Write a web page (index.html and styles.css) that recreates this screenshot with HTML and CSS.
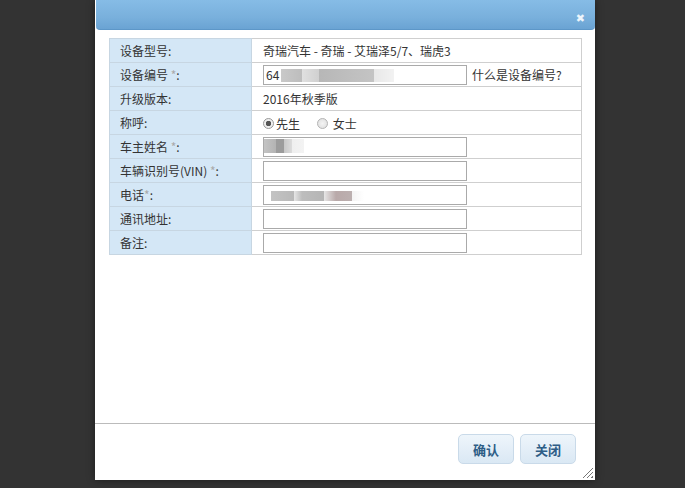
FILE: index.html
```html
<!DOCTYPE html>
<html lang="zh-CN">
<head>
  <meta charset="UTF-8" />
  <title>设备信息</title>
  <link rel="stylesheet" href="styles.css">
</head>
<body>
  <div class="dialog">
    <div class="titlebar">
      <span class="close">&#10006;</span>
    </div>

    <div class="content">
      <table class="form-table">
        <tr>
          <th>设备型号:</th>
          <td>奇瑞汽车 - 奇瑞 - 艾瑞泽5/7、瑞虎3</td>
        </tr>
        <tr>
          <th>设备编号 <i>*</i>:</th>
          <td><input type="text" class="masked mask-sn" value="64" /><span class="help">什么是设备编号?</span></td>
        </tr>
        <tr>
          <th>升级版本:</th>
          <td>2016年秋季版</td>
        </tr>
        <tr>
          <th>称呼:</th>
          <td>
            <label class="radio"><span class="dot on"></span>先生</label>
            <label class="radio"><span class="dot"></span>女士</label>
          </td>
        </tr>
        <tr>
          <th>车主姓名 <i>*</i>:</th>
          <td><input type="text" class="masked mask-name" /></td>
        </tr>
        <tr>
          <th>车辆识别号(VIN) <i>*</i>:</th>
          <td><input type="text" /></td>
        </tr>
        <tr>
          <th>电话<i>*</i>:</th>
          <td><input type="text" class="masked mask-tel" /></td>
        </tr>
        <tr>
          <th>通讯地址:</th>
          <td><input type="text" /></td>
        </tr>
        <tr>
          <th>备注:</th>
          <td><input type="text" /></td>
        </tr>
      </table>
    </div>

    <div class="footer">
      <button>确认</button>
      <button>关闭</button>
      <span class="grip"></span>
    </div>
  </div>
</body>
</html>
```

FILE: styles.css
```css
body {
  margin: 0;
  background: #333;
  font-family: "Noto Sans CJK SC", "DejaVu Sans", sans-serif;
  font-size: 12px;
  color: #333;
  height: 488px;
  overflow: hidden;
}
.dialog {
  margin-left: 95px;
  width: 500px;
  height: 480px;
  background: #fff;
  display: flex;
  flex-direction: column;
  box-shadow: 0 0 8px rgba(0, 0, 0, 0.45);
}
.titlebar {
  height: 30px;
  margin-left: 1px;
  background: linear-gradient(#86bce6, #79b0dc 60%, #6aa3d3);
  border-radius: 0 0 4px 4px;
  border-bottom: 1px solid #5d97c8;
  box-sizing: border-box;
  display: flex;
  justify-content: flex-end;
  align-items: flex-end;
  padding: 0 10px 6px 0;
}
.close {
  color: #eef5fb;
  font-size: 11px;
  font-weight: bold;
  line-height: 12px;
}
.content {
  flex: 1;
  padding: 8px 13px 0 14px;
}
.form-table {
  width: 473px;
  border-collapse: collapse;
}
.form-table th,
.form-table td {
  border: 1px solid #cfcfcf;
  height: 23px;
  padding: 0;
  text-align: left;
  font-weight: normal;
  white-space: nowrap;
}
.form-table th {
  width: 131px;
  background: #d4e7f6;
  padding-left: 10px;
  border-color: #c7d6e2;
}
.form-table td {
  padding-left: 11px;
}
.form-table i {
  font-style: normal;
  color: #aaa;
}
input[type="text"] {
  width: 204px;
  height: 20px;
  box-sizing: border-box;
  border: 1px solid #aaa;
  padding: 0 2px;
  font: inherit;
  color: #333;
  vertical-align: middle;
  background-color: #fff;
  background-repeat: no-repeat;
}
.help {
  margin-left: 5px;
  vertical-align: middle;
}
input.mask-sn {
  background-image:
    linear-gradient(90deg, transparent 17px, #c9c9c9 17px, #bdbdbd 38px, #e0e0e0 38px, #d0d0d0 55px, #b7b7b7 55px, #c4c4c4 110px, #e8e8e8 110px, #f2f2f2 130px, transparent 130px);
  background-size: 100% 13px;
  background-position: 0 3px;
}
input.mask-name {
  background-image:
    linear-gradient(90deg, #c4c4c4 0, #b3b3b3 12px, #9c9c9c 12px, #9c9c9c 20px, #c8c8c8 20px, #dcdcdc 28px, #efefef 28px, #f3f3f3 40px, transparent 40px);
  background-size: 100% 14px;
  background-position: 0 1px;
}
input.mask-tel {
  background-image:
    linear-gradient(90deg, transparent 7px, #c3c3c3 7px, #b9b9b9 30px, #e6e6e6 30px, #bdbdbd 38px, #b5b5b5 60px, #e6e6e6 60px, #b9a9a9 72px, #bcb0b0 88px, #f4f4f4 88px, transparent 100px);
  background-size: 100% 10px;
  background-position: 0 5px;
}
.radio {
  display: inline-flex;
  align-items: center;
  margin-right: 14px;
  vertical-align: middle;
}
.dot {
  width: 11px;
  height: 11px;
  border-radius: 50%;
  box-sizing: border-box;
  border: 1px solid #b5b5b5;
  background: radial-gradient(#f4f4f4, #dcdcdc);
  margin-right: 2px;
}
.radio:last-child .dot {
  margin-right: 5px;
}
.dot.on {
  background: radial-gradient(#555 0 2.5px, #eee 3px);
  border-color: #999;
}
.footer {
  height: 46px;
  border-top: 1px solid #bbb;
  display: flex;
  justify-content: flex-end;
  align-items: flex-start;
  gap: 6px;
  padding: 10px 19px 0 0;
  position: relative;
}
.footer button {
  width: 56px;
  height: 30px;
  border: 1px solid #c9dae9;
  border-radius: 5px;
  background: linear-gradient(#eef5fb, #dae8f4);
  color: #2e5d86;
  font: bold 13px "Noto Sans CJK SC", sans-serif;
  cursor: pointer;
}
.grip {
  position: absolute;
  right: 2px;
  bottom: 2px;
  width: 11px;
  height: 11px;
  background: repeating-linear-gradient(135deg, transparent 0 2px, #777 2px 3px);
  clip-path: polygon(100% 0, 100% 100%, 0 100%);
}
```
